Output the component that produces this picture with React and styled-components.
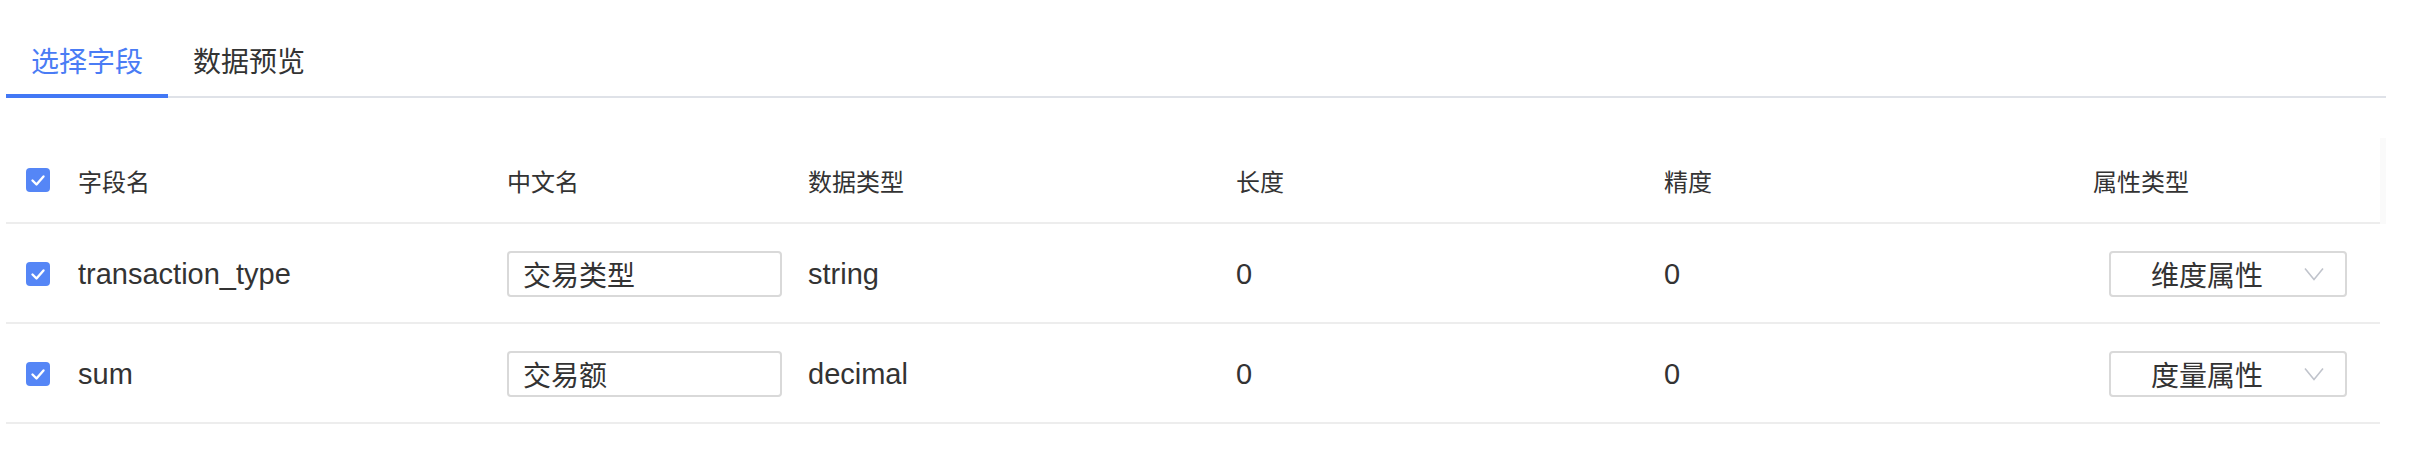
import React from "react";
import styled, { createGlobalStyle } from "styled-components";

const GlobalStyle = createGlobalStyle`
  body {
    margin: 0;
    background: #ffffff;
    font-family: "Liberation Sans", "Noto Sans CJK SC", sans-serif;
    color: #333333;
  }
`;

const Page = styled.div`
  width: 2380px;
  padding: 26px 0 0 6px;
`;

const TabList = styled.div`
  display: flex;
  border-bottom: 2px solid #dfe2e8;
`;

const Tab = styled.div`
  padding: 5px 25px 0;
  line-height: 63px;
  font-size: 28px;
  margin-bottom: -2px;
  border-bottom: 4px solid ${(p) => (p.$active ? "#4278f5" : "transparent")};
  color: ${(p) => (p.$active ? "#4a7cf5" : "#333333")};
  cursor: pointer;
`;

const Table = styled.div`
  margin-top: 40px;
`;

const Row = styled.div`
  display: grid;
  grid-template-columns: 52px 429px 301px 428px 428px 436px 300px 6px;
`;

const HeadCell = styled.div`
  height: 84px;
  display: flex;
  align-items: center;
  padding-left: ${(p) => p.$pad ?? 20}px;
  border-bottom: 2px solid #ededed;
  font-size: 24px;
  color: #333333;
  white-space: nowrap;
`;

const Gutter = styled.div`
  background: ${(p) => (p.$head ? "#fafafa" : "transparent")};
`;

const Cell = styled.div`
  height: 98px;
  display: flex;
  align-items: center;
  justify-content: ${(p) => (p.$center ? "center" : "flex-start")};
  padding: ${(p) => (p.$center ? "2px 4px 0 0" : "2px 0 0 20px")};
  box-sizing: border-box;
  height: 100px;
  border-bottom: 2px solid #ededed;
  font-size: 29px;
  color: #333333;
  white-space: nowrap;
`;

const CheckBox = styled.span`
  width: 24px;
  height: 24px;
  border-radius: 4px;
  background: #5586f6;
  display: inline-flex;
  align-items: center;
  justify-content: center;
`;

const NameInput = styled.div`
  box-sizing: border-box;
  width: 275px;
  height: 46px;
  border: 2px solid #d9d9d9;
  border-radius: 4px;
  padding-left: 14px;
  display: flex;
  align-items: center;
  font-size: 28px;
  color: #333333;
`;

const Select = styled.div`
  box-sizing: border-box;
  width: 238px;
  height: 46px;
  border: 2px solid #d9d9d9;
  border-radius: 4px;
  padding: 0 21px 0 40px;
  display: flex;
  align-items: center;
  justify-content: space-between;
  font-size: 28px;
  color: #333333;
`;

const Check = () => (
  <CheckBox>
    <svg width="24" height="24" viewBox="0 0 24 24">
      <polyline
        points="6.5,12.5 10.5,16.5 17.5,8.5"
        fill="none"
        stroke="#ffffff"
        strokeWidth="2.4"
        strokeLinecap="round"
        strokeLinejoin="round"
      />
    </svg>
  </CheckBox>
);

const Chevron = () => (
  <svg width="20" height="14" viewBox="0 0 20 14">
    <polyline points="1,1.5 10,12.5 19,1.5" fill="none" stroke="#c0c4cc" strokeWidth="1.6" />
  </svg>
);

const fields = [
  { name: "transaction_type", label: "交易类型", type: "string", len: 0, prec: 0, attr: "维度属性" },
  { name: "sum", label: "交易额", type: "decimal", len: 0, prec: 0, attr: "度量属性" },
];

export default function App() {
  return (
    <Page>
      <GlobalStyle />
      <TabList>
        <Tab $active>选择字段</Tab>
        <Tab>数据预览</Tab>
      </TabList>
      <Table>
        <Row>
          <HeadCell><Check /></HeadCell>
          <HeadCell>字段名</HeadCell>
          <HeadCell>中文名</HeadCell>
          <HeadCell>数据类型</HeadCell>
          <HeadCell>长度</HeadCell>
          <HeadCell>精度</HeadCell>
          <HeadCell $pad={13}>属性类型</HeadCell>
          <Gutter $head />
        </Row>
        {fields.map((f) => (
          <Row key={f.name}>
            <Cell><Check /></Cell>
            <Cell>{f.name}</Cell>
            <Cell>
              <NameInput>{f.label}</NameInput>
            </Cell>
            <Cell>{f.type}</Cell>
            <Cell>{f.len}</Cell>
            <Cell>{f.prec}</Cell>
            <Cell $center>
              <Select>
                <span>{f.attr}</span>
                <Chevron />
              </Select>
            </Cell>
            <Gutter />
          </Row>
        ))}
      </Table>
    </Page>
  );
}
